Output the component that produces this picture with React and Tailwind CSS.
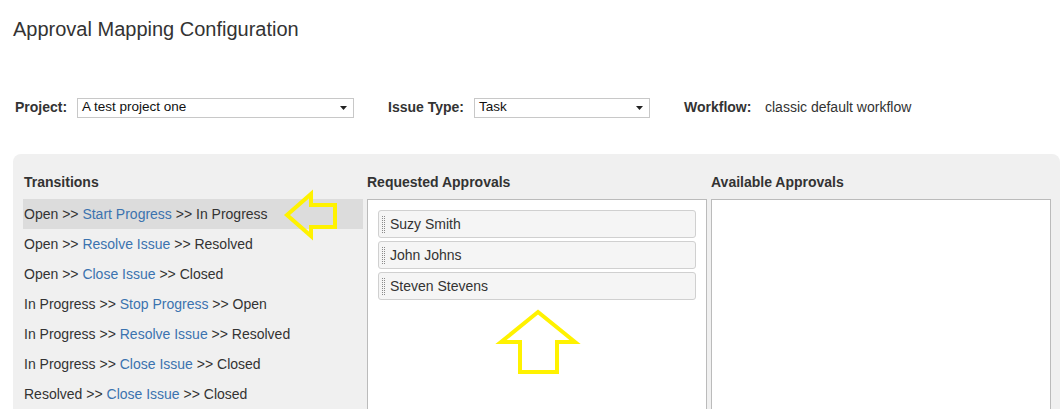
import React from "react";

const transitions = [
  ["Open", "Start Progress", "In Progress"],
  ["Open", "Resolve Issue", "Resolved"],
  ["Open", "Close Issue", "Closed"],
  ["In Progress", "Stop Progress", "Open"],
  ["In Progress", "Resolve Issue", "Resolved"],
  ["In Progress", "Close Issue", "Closed"],
  ["Resolved", "Close Issue", "Closed"],
];

function Select({ value, className }) {
  return (
    <div
      className={
        "h-[20px] border border-[#c8c8c8] bg-white flex items-center justify-between pl-[4px] pr-[6px] text-[13.5px] text-[#111] " +
        className
      }
    >
      <span>{value}</span>
      <svg width="7" height="4" viewBox="0 0 7 4">
        <path d="M0 0H7L3.5 4Z" fill="#222" />
      </svg>
    </div>
  );
}

export default function App() {
  return (
    <div className="relative w-[1063px] h-[409px] overflow-hidden bg-white font-['Liberation_Sans',Arial,sans-serif] text-[#333]">
      <h1 className="pl-[13px] pt-[17px] text-[20px] leading-[24px] text-[#333]">
        Approval Mapping Configuration
      </h1>

      <div className="mt-[56px] h-[21px] flex items-center pl-[15px] text-[14px]">
        <span className="w-[62px] shrink-0 font-bold text-[#333]">Project:</span>
        <Select value="A test project one" className="w-[277px] shrink-0" />
        <span className="ml-[34px] w-[86px] shrink-0 font-bold text-[#333]">Issue Type:</span>
        <Select value="Task" className="w-[176px] shrink-0" />
        <span className="ml-[34px] w-[81px] shrink-0 font-bold text-[#333]">Workflow:</span>
        <span className="text-[#333]">classic default workflow</span>
      </div>

      <div className="mt-[36px] ml-[13px] w-[1047px] h-[300px] rounded-[8px] bg-[#f0f0f0] pt-[20px] pl-[10px] pr-[9px]">
        <div className="grid grid-cols-[340px_340px_340px] gap-x-[4px]">
          <div>
            <div className="h-[17px] leading-[17px] mb-[8px] pl-[1px] text-[14px] font-bold text-[#333]">
              Transitions
            </div>
            <div className="flex flex-col">
              {transitions.map(([from, action, to], i) => (
                <div
                  key={i}
                  className={
                    "h-[30px] leading-[30px] pl-[1px] text-[14px] text-[#333] whitespace-nowrap " +
                    (i === 0 ? "bg-[#dcdcdc]" : "")
                  }
                >
                  {from} &gt;&gt; <span className="text-[#3b73af]">{action}</span> &gt;&gt; {to}
                </div>
              ))}
            </div>
          </div>

          <div>
            <div className="h-[17px] leading-[17px] mb-[8px] text-[14px] font-bold text-[#333]">
              Requested Approvals
            </div>
            <div className="h-[240px] border border-[#bbb] bg-white p-[10px] flex flex-col gap-[3px]">
              {["Suzy Smith", "John Johns", "Steven Stevens"].map((n) => (
                <div
                  key={n}
                  className="h-[28px] border border-[#d0d0d0] rounded-[3px] bg-[#f5f5f5] flex items-center pl-[3px] text-[14px] text-[#333]"
                >
                  <span className="w-[3px] h-[17px] border-x border-dotted border-[#8a8a8a]" />
                  <span className="ml-[5px]">{n}</span>
                </div>
              ))}
            </div>
          </div>

          <div>
            <div className="h-[17px] leading-[17px] mb-[8px] text-[14px] font-bold text-[#333]">
              Available Approvals
            </div>
            <div className="h-[240px] border border-[#bbb] bg-white" />
          </div>
        </div>
      </div>

      <svg
        className="absolute left-0 top-0 pointer-events-none"
        width="1063"
        height="409"
        viewBox="0 0 1063 409"
      >
        <polygon
          points="287,215 311,194 311,205 335,205 335,227 311,227 311,236"
          fill="none"
          stroke="#fff200"
          strokeWidth="4"
          strokeLinejoin="miter"
        />
        <polygon
          points="538,312 575,342 557,342 557,372 520,372 520,342 501,342"
          fill="none"
          stroke="#fff200"
          strokeWidth="4"
          strokeLinejoin="miter"
        />
      </svg>
    </div>
  );
}
